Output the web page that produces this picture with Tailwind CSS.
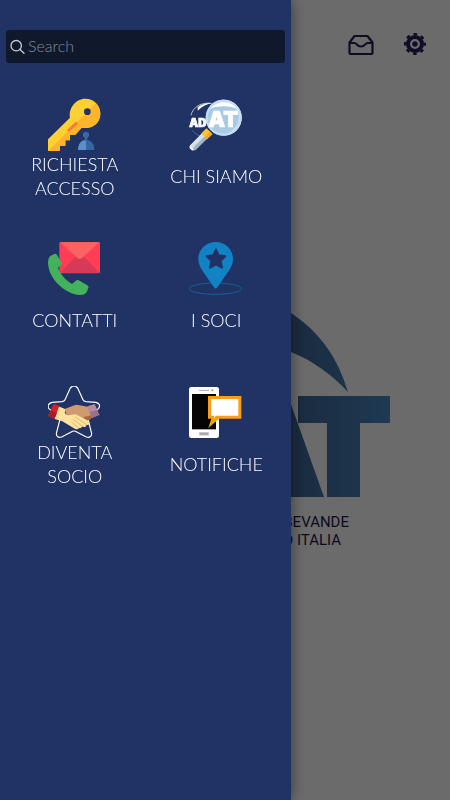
<!DOCTYPE html>
<html lang="it">
<head>
  <meta charset="UTF-8">
  <meta name="viewport" content="width=device-width, initial-scale=1.0">
  <title>ADAT - Menu</title>
  <script src="https://cdn.jsdelivr.net/npm/@tailwindcss/browser@4"></script>
</head>
<body class="min-h-screen bg-white font-['Lato',sans-serif]">

<!-- Home -->
<div class="min-h-screen overflow-hidden">
  <header class="flex justify-end items-center gap-7 h-22 pr-[23px]">
    <button type="button" aria-label="Messaggi">
      <svg class="w-7 h-7" viewBox="0 0 28 28" fill="none" stroke="#261d5a" stroke-width="2.200" stroke-linejoin="round">
        <path d="M2.500 12.500L7.500 6H20.500L25.500 12.500V22.500Q25.500 24 24 24H4Q2.500 24 2.500 22.500Z"/>
        <path d="M2.500 13H7.500C10 13 9.500 16.500 14 16.500S18 13 20.500 13H25.500"/>
      </svg>
    </button>
    <button type="button" aria-label="Impostazioni">
      <svg class="w-6 h-6" viewBox="0 0 24 24" fill="none" stroke="#261d5a">
        <circle cx="12" cy="12" r="7" stroke-width="4"/>
        <circle cx="12" cy="12" r="9.800" stroke-width="2.400" stroke-dasharray="3.600 4.097" stroke-dashoffset="1.800"/>
        <circle cx="12" cy="12" r="2.700" fill="#261d5a" stroke="none"/>
      </svg>
    </button>
  </header>

  <main class="max-w-[330px] mx-auto pt-[209px]">
    <svg class="w-full" viewBox="0 0 330 200" role="img" aria-label="ADAT">
      <defs>
        <linearGradient id="logo-blue" gradientUnits="userSpaceOnUse" x1="220" y1="0" x2="330" y2="0">
          <stop offset="0" stop-color="#3c6191"/>
          <stop offset="1" stop-color="#4a8bc6"/>
        </linearGradient>
      </defs>
      <g fill="url(#logo-blue)">
        <path d="M288 95C278 61 260 35 231 16C206 0 170 -5 140 3C176 28 205 43 231 55C254 64 273 79 288 95Z"/>
        <path d="M238 99H330V126H300V200H267V126H238Z"/>
        <path d="M228 99L264 200H140L180 99Z"/>
      </g>
    </svg>
    <p class="pt-4 pr-[41px] text-right text-[15px] leading-[18px] text-[#1d184c] font-['Roboto',sans-serif]">
      <span class="block">BEVANDE</span>
      <span class="block pr-2">O ITALIA</span>
    </p>
  </main>
</div>

<div class="fixed inset-0 bg-black/58"></div>

<!-- Menu -->
<aside class="fixed inset-y-0 left-0 w-[291px] max-w-full pt-[30px] bg-[#203364] shadow-[0_0_14px_rgba(0,0,0,0.5)]">
  <form class="px-[6px]">
    <label class="flex items-center gap-[2px] h-[33px] px-1 rounded-[3px] bg-[#10192b]">
      <svg class="w-4 h-4 shrink-0" viewBox="0 0 16 16" fill="none" stroke="#c8ccd4" stroke-width="1.300" stroke-linecap="round">
        <circle cx="6.200" cy="6.700" r="5.200"/>
        <path d="M10 10.500L14 14.300"/>
      </svg>
      <input type="text" aria-label="Search" placeholder="Search" class="w-full min-w-0 pb-[2px] bg-transparent outline-none text-base font-light text-white placeholder:text-[#838b9b]">
    </label>
  </form>

  <nav class="grid grid-cols-2 gap-y-[42px] px-1 pt-[35px] text-center text-lg leading-6 font-light text-white">
    <a href="#accesso" class="flex flex-col items-center">
      <svg class="w-[54px] h-[54px]" viewBox="54 24 162 162">
        <path fill="#ffd033" d="M54 148L120 83C115 56 136 26 166 26C194 26 211 48 211 71C211 99 186 119 155 113L136 134H120V151H106V167H90V183H54Z"/>
        <path fill="#ffb52b" d="M54 183L198 40C207 48 211 59 211 71C211 99 186 119 155 113L136 134H120V151H106V167H90V183Z"/>
        <path stroke="#fc7a31" stroke-width="9" d="M114 123L141 98"/>
        <circle cx="172" cy="65" r="10" fill="#203364"/>
        <circle cx="168" cy="134" r="9" fill="#3f73b3"/>
        <path fill="#5b8fcb" d="M144 180C144 160 154 150 168 150V180Z"/>
        <path fill="#3567a5" d="M168 150C183 150 193 160 193 180H168Z"/>
        <path fill="#3567a5" d="M162 126H174L172 148L168 153L164 148Z"/>
      </svg>
      <span class="flex items-center h-12">RICHIESTA<br>ACCESSO</span>
    </a>

    <a href="#chi-siamo" class="flex flex-col items-center">
      <svg class="w-[54px] h-[54px]" viewBox="72 24 162 162">
        <path fill="none" stroke="#fff" stroke-width="2" d="M78 76C84 51 108 36 140 40"/>
        <path fill="#fff" d="M98 52C108 43 124 38 140 39C124 43 110 50 98 62Z"/>
        <path fill="none" stroke="#b9cbe6" stroke-width="1" d="M82 121C88 130 98 137 108 138"/>
        <circle cx="176" cy="83" r="54" fill="#aecfe9"/>
        <path fill="#cce2f4" d="M176 29C206 29 230 53 230 83C230 102 220 118 206 128L134 48C144 36 160 29 176 29Z"/>
        <circle cx="176" cy="83" r="45" fill="#a9c9e4"/>
        <path fill="#fff" d="M135 56C149 40 173 33 193 39C205 43 214 50 218 57C196 47 164 45 135 56Z"/>
        <circle cx="176" cy="83" r="51" fill="none" stroke="#c3dcf1" stroke-width="6"/>
        <text x="73" y="110" fill="#fff" stroke="#fff" stroke-width="2" font-family="Inter" font-weight="900" font-size="34">AD</text>
        <text x="130" y="110" fill="#fff" stroke="#fff" stroke-width="2" font-family="Inter" font-weight="900" font-size="64">AT</text>
        <path stroke="#fff" stroke-width="20" stroke-linecap="round" d="M84 171L116 139"/>
        <path stroke="#9fb4c5" stroke-width="11" stroke-linecap="round" d="M89 175L122 143"/>
        <path stroke="#d4e1ea" stroke-width="10" stroke-linecap="round" d="M82 168L114 136"/>
        <path stroke="#ffc62e" stroke-width="24" d="M117 139L133 123"/>
        <path stroke="#f5a623" stroke-width="10" d="M123 144L139 129"/>
      </svg>
      <span class="flex items-center h-12">CHI SIAMO</span>
    </a>

    <a href="#contatti" class="flex flex-col items-center">
      <svg class="w-[54px] h-[54px]" viewBox="69 21 162 162">
        <rect x="103" y="21" width="122" height="94" rx="4" fill="#ff3d55"/>
        <path fill="#d63a56" d="M105 114L151 65H177L223 114Z"/>
        <path fill="#fb6263" d="M105 22H223L172 68Q164 75 156 68Z"/>
        <path fill="#44b25c" d="M76 63L88 57Q93 55 96 60L109 82Q112 87 107 91L99 98C105 116 122 136 141 147L152 138Q156 134 161 136L187 151Q192 154 190 159L185 171C180 181 159 183 138 174C99 158 68 118 69 80Q69 68 76 63Z"/>
      </svg>
      <span class="flex items-center h-12">CONTATTI</span>
    </a>

    <a href="#soci" class="flex flex-col items-center">
      <svg class="w-[54px] h-[54px]" viewBox="72 21 162 162">
        <ellipse cx="151" cy="161" rx="78" ry="17" fill="none" stroke="#17609c" stroke-width="3"/>
        <path fill="#1182c4" d="M152 21C180 21 204 43 204 72C204 94 189 110 178 127Q168 143 156 158Q152 163 148 158Q136 143 126 127C115 110 100 94 100 72C100 43 124 21 152 21Z"/>
        <path fill="#203364" stroke="#203364" stroke-width="6" stroke-linejoin="round" d="M153 43L161 61L181 64L167 77L171 98L153 88L135 98L139 77L125 64L145 61Z"/>
      </svg>
      <span class="flex items-center h-12">I SOCI</span>
    </a>

    <a href="#diventa-socio" class="flex flex-col items-center">
      <svg class="w-[54px] h-[54px]" viewBox="69 18 162 162">
        <path fill="none" stroke="#fff" stroke-width="3.500" d="M136 24Q147 11 158 24L174 59Q176 64 183 65L213 67Q229 72 221 85L193 111Q189 115 190 121L200 161Q199 175 184 171L151 154Q147 152 143 154L110 171Q95 175 94 161L104 121Q105 115 101 111L71 85Q65 72 81 67L111 65Q118 64 120 59Z"/>
        <path fill="#d09a71" d="M121 86L148 76Q156 73 163 76L196 82L207 109L192 119L178 125L150 106L132 109Q119 103 121 86Z"/>
        <path fill="#a96843" d="M175 111L207 104L196 118L183 124Z"/>
        <path fill="#9b7189" d="M188 79L209 73L224 105L200 115Z"/>
        <path fill="#b78ba4" d="M188 79L209 73L216 89L195 96Z"/>
        <path fill="#ffe29b" d="M100 79L122 88L119 98Q125 109 137 105L151 103L187 121Q195 125 194 132Q190 137 184 134Q185 141 176 141Q173 140 172 139Q170 146 162 144Q157 151 147 145L112 124L87 116Z"/>
        <path stroke="#d6ab71" stroke-width="2.500" stroke-linecap="round" d="M151 111L184 134M145 118L172 139M140 127L161 144"/>
        <path fill="#d71f28" d="M86 71L103 78L88 118L69 107Z"/>
        <path fill="#a51d29" d="M75 92L96 98L88 118L69 107Z"/>
      </svg>
      <span class="flex items-center h-12">DIVENTA<br>SOCIO</span>
    </a>

    <a href="#notifiche" class="flex flex-col items-center">
      <svg class="w-[54px] h-[54px]" viewBox="72 18 162 162">
        <rect x="72" y="21" width="90" height="153" rx="7" fill="#fff"/>
        <rect x="81" y="42" width="72" height="106" fill="#050505"/>
        <path stroke="#aaa" stroke-width="3" d="M102 31H132"/>
        <circle cx="142" cy="31" r="3" fill="#999"/>
        <rect x="103" y="157" width="28" height="9" fill="#aaa"/>
        <path fill="#fa9d1c" d="M129 48H229V116H162L130 144L139 116H129Z"/>
        <path fill="#fff" d="M138 57H220V107H153L146 116L149 107H138Z"/>
      </svg>
      <span class="flex items-center h-12">NOTIFICHE</span>
    </a>
  </nav>
</aside>

</body>
</html>
